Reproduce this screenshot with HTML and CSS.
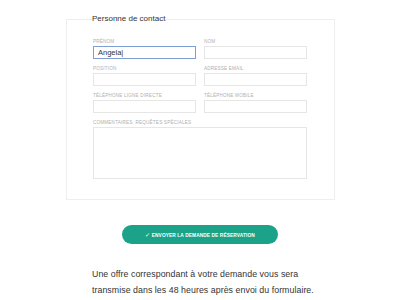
FILE: index.html
```html
<!DOCTYPE html>
<html lang="fr">
<head>
<meta charset="utf-8">
<link rel="stylesheet" href="styles.css">
</head>
<body>
<div class="page">
  <fieldset class="contact">
    <legend class="legend">Personne de contact</legend>
    <div class="grid">
      <div class="field">
        <label class="label">Prénom</label>
        <div class="input focus">Angela|</div>
      </div>
      <div class="field">
        <label class="label">Nom</label>
        <div class="input"></div>
      </div>
      <div class="field">
        <label class="label">Position</label>
        <div class="input"></div>
      </div>
      <div class="field">
        <label class="label">Adresse email</label>
        <div class="input"></div>
      </div>
      <div class="field">
        <label class="label">Téléphone ligne directe</label>
        <div class="input"></div>
      </div>
      <div class="field">
        <label class="label">Téléphone mobile</label>
        <div class="input"></div>
      </div>
      <div class="field wide">
        <label class="label">Commentaires, requêtes spéciales</label>
        <div class="textarea"></div>
      </div>
    </div>
  </fieldset>
  <div class="actions">
    <button class="submit"><span class="check">✓</span> Envoyer la demande de réservation</button>
  </div>
  <p class="note">Une offre correspondant à votre demande vous sera transmise dans les 48 heures après envoi du formulaire.</p>
</div>
</body>
</html>
```
FILE: styles.css
```css
html, body {
  margin: 0;
  padding: 0;
  background: #fff;
}
body {
  font-family: "Liberation Sans", Arial, sans-serif;
  color: #333;
}
.page {
  width: 400px;
  height: 300px;
  overflow: hidden;
  padding-top: 13px;
  box-sizing: border-box;
}
.contact {
  margin: 0 65px 0 66px;
  padding: 13px 26px 20px 26px;
  border: 1px solid #eeeeee;
  min-width: 0;
  box-sizing: border-box;
  width: 269px;
}
.legend {
  font-size: 8px;
  color: #333;
  padding: 0;
  margin-left: -1px;
  line-height: 12px;
}
.grid {
  display: grid;
  grid-template-columns: 103px 103px;
  column-gap: 8px;
  row-gap: 6px;
}
.field {
  display: flex;
  flex-direction: column;
}
.wide {
  grid-column: 1 / 3;
}
.label {
  font-size: 4.6px;
  line-height: 7px;
  text-transform: uppercase;
  color: #b0b0b0;
  letter-spacing: 0.2px;
  margin-bottom: 1px;
}
.input {
  height: 13px;
  border: 1px solid #e6e6e6;
  box-sizing: border-box;
  font-size: 7.5px;
  line-height: 11px;
  padding-left: 4px;
  color: #333;
}
.focus {
  border: 1px solid #7f9fd4;
}
.textarea {
  height: 52px;
  border: 1px solid #e6e6e6;
  box-sizing: border-box;
}
.actions {
  display: flex;
  justify-content: center;
  margin-top: 25px;
}
.submit {
  width: 156px;
  height: 19px;
  border: none;
  border-radius: 10px;
  background: #1aa388;
  color: #fff;
  font-family: "Liberation Sans", Arial, sans-serif;
  font-weight: bold;
  font-size: 4.8px;
  text-transform: uppercase;
  letter-spacing: 0.1px;
  padding: 0;
}
.check {
  font-size: 6px;
  font-weight: normal;
}
.note {
  margin: 23px 0 0 92px;
  width: 240px;
  font-size: 8.8px;
  line-height: 15.5px;
  color: #333;
  letter-spacing: 0.05px;
}
```
